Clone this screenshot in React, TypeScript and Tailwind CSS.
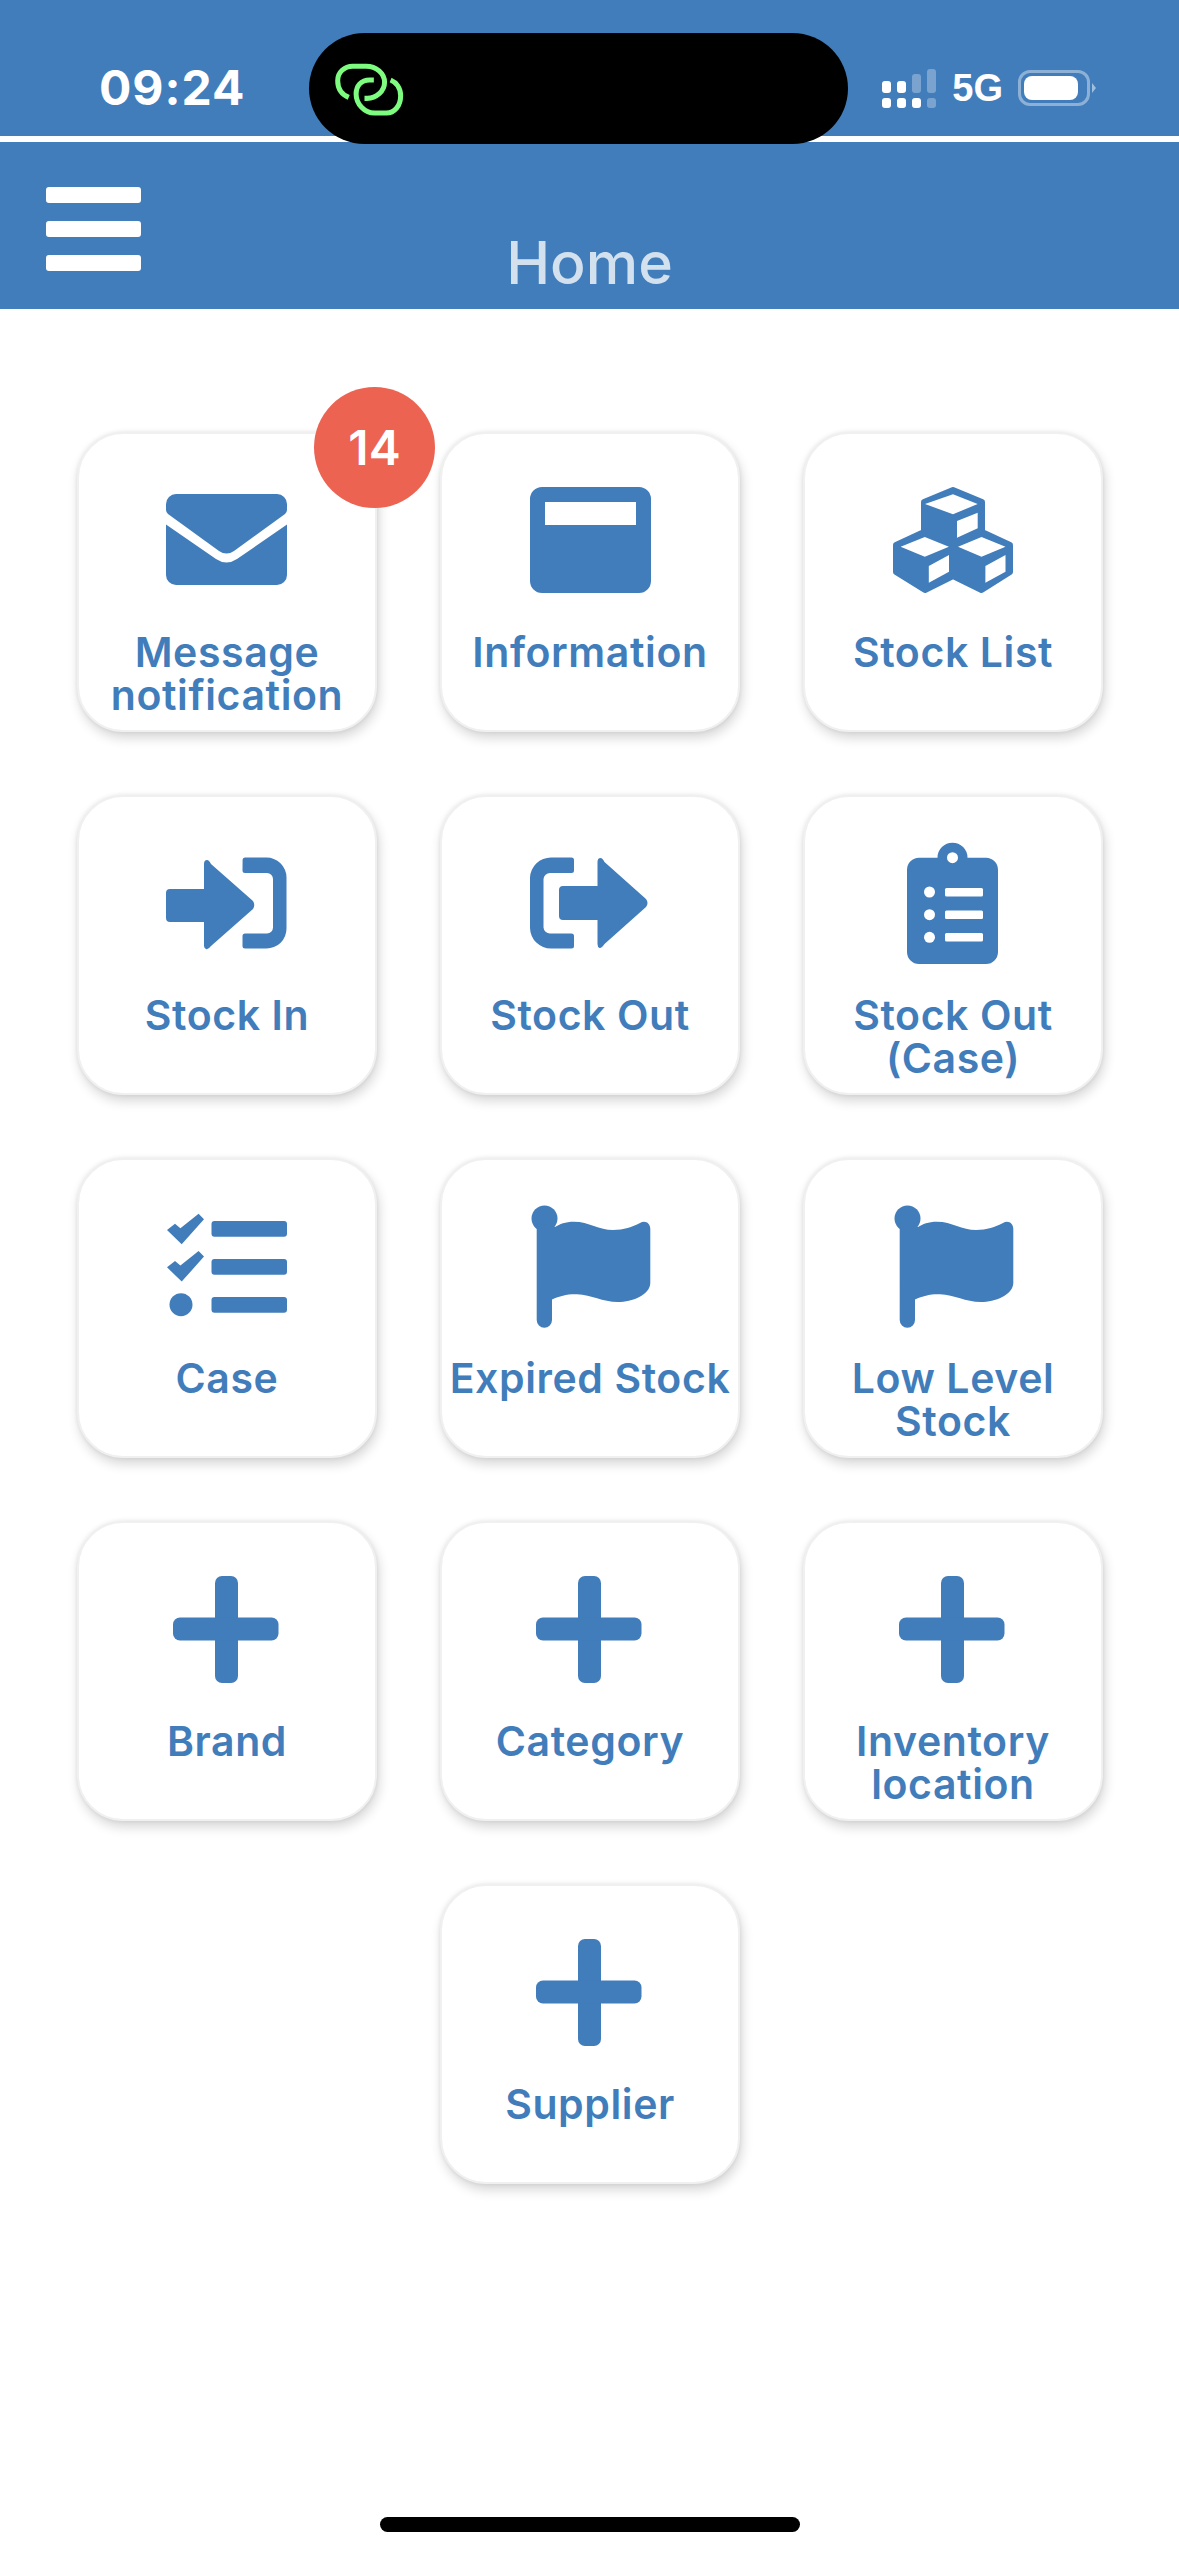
const menuItems = [
  { label: "Message notification", icon: <EnvelopeIcon />, badge: "14" },
  { label: "Information", icon: <InfoIcon /> },
  { label: "Stock List", icon: <CubesIcon /> },
  { label: "Stock In", icon: <StockInIcon /> },
  { label: "Stock Out", icon: <StockOutIcon /> },
  { label: "Stock Out (Case)", icon: <ClipboardIcon /> },
  { label: "Case", icon: <ChecklistIcon /> },
  { label: "Expired Stock", icon: <FlagIcon /> },
  { label: "Low Level Stock", icon: <FlagIcon /> },
  { label: "Brand", icon: <PlusIcon /> },
  { label: "Category", icon: <PlusIcon /> },
  { label: "Inventory location", icon: <PlusIcon /> },
  { label: "Supplier", icon: <PlusIcon /> },
];

export default function App() {
  return (
    <div className="relative flex h-[2556px] flex-col overflow-hidden bg-white font-['Inter',sans-serif]">
      {/* Status bar */}
      <div className="flex h-[136px] items-start justify-between bg-[#417dbb] pl-[99px] pr-[83px] pt-[60px] text-white">
        <span className="text-[48px] font-bold leading-[56px] tracking-[1px]">09:24</span>
        <div className="mt-[8px] flex items-center">
          <SignalBars />
          <span className="ml-[16px] font-['Liberation_Sans',sans-serif] text-[38px] font-bold leading-[40px]">5G</span>
          <Battery />
        </div>
      </div>
      <div className="h-[6px] bg-white" />

      {/* Dynamic island */}
      <div className="absolute left-[309px] top-[33px] h-[111px] w-[539px] rounded-[56px] bg-black">
        <svg className="absolute left-[22px] top-[24px]" width="77" height="64" viewBox="90 80 230 190" fill="none" stroke="#7dfc7f" strokeWidth="15">
          <path d="M143 200C120 190 110 170 110 150C110 125 130 107 155 107H195C225 107 250 128 250 155C250 182 225 203 198 203H190" />
          <path d="M218 148H205C180 148 165 165 165 190C165 220 190 247 220 247H255C280 247 298 225 298 195C298 172 285 155 268 148" />
        </svg>
      </div>

      {/* Header */}
      <div className="grid h-[167px] grid-cols-3 bg-[#417dbb]">
        <div className="flex flex-col gap-[18px] pl-[46px] pt-[45px]">
          <div className="h-[16px] w-[95px] rounded-[3px] bg-white" />
          <div className="h-[16px] w-[95px] rounded-[3px] bg-white" />
          <div className="h-[16px] w-[95px] rounded-[3px] bg-white" />
        </div>
        <div className="pt-[87px] text-center text-[59px] font-medium leading-[68px] text-[#d3e1ef]">Home</div>
      </div>

      {/* Menu grid */}
      <div className="flex flex-wrap justify-center gap-[63px] pl-[77px] pr-[76px] pt-[123px]">
        {menuItems.map((item) => (
          <MenuCard key={item.label} {...item} />
        ))}
      </div>

      <div className="mt-auto mb-[24px] h-[15px] w-[420px] self-center rounded-full bg-black" />
    </div>
  );
}

function MenuCard({ label, icon, badge }: { label: string; icon: React.ReactNode; badge?: string }) {
  return (
    <div className="relative flex h-[300px] w-[300px] flex-col items-center rounded-[46px] border-[2px] border-[#f0f0f0] bg-white pt-[43px] shadow-[2px_6px_12px_rgba(0,0,0,0.16),0_0_4px_rgba(0,0,0,0.08)]">
      {icon}
      <div className="mt-[26px] px-[2px] text-center text-[41px] font-semibold leading-[42.5px] tracking-[0.6px] text-[#417dbb]">{label}</div>
      {badge && (
        <div className="absolute right-[-60px] top-[-47px] flex h-[121px] w-[121px] items-center justify-center rounded-full bg-[#ec6352] text-[48px] font-semibold text-white">
          {badge}
        </div>
      )}
    </div>
  );
}

function IconBox({ children }: { children: React.ReactNode }) {
  return (
    <svg className="ml-[2px] shrink-0" width="128" height="128" viewBox="0 0 128 128" fill="#417dbb">
      {children}
    </svg>
  );
}

function EnvelopeIcon() {
  return (
    <IconBox>
      <path d="M12 17H113a10 10 0 0 1 10 10v6q0 2-2 4L70 74q-7.5 5-15 0L4 37q-2-2-2-4v-6a10 10 0 0 1 10-10z" />
      <path d="M2 47.5L52 82q10.5 7 21 0L123 47.5V98a10 10 0 0 1-10 10H12a10 10 0 0 1-10-10z" />
    </IconBox>
  );
}

function InfoIcon() {
  return (
    <IconBox>
      <path fillRule="evenodd" d="M15 10H112a12 12 0 0 1 12 12V104a12 12 0 0 1-12 12H15a12 12 0 0 1-12-12V22a12 12 0 0 1 12-12zM18 25V48H109V25z" />
    </IconBox>
  );
}

function CubesIcon() {
  return (
    <IconBox>
      <path stroke="#417dbb" strokeWidth="6" strokeLinejoin="round" d="M63 13L92 25V55L120 68V95L91.5 113L63 99L35 113L6 95V68L34 55V25Z" />
      <g fill="#fff">
        <path d="M35 27L63 17.3L87.7 27L63 37.3Z" />
        <path d="M67 44L87.7 35.7V51.3L67 60.7Z" />
        <path d="M10.6 69.7L34.8 60L58.9 69.7L34.8 79.7Z" />
        <path d="M38.8 89L59 78V94.7L38.8 105.7Z" />
        <path d="M68 69.7L91.5 60L115.5 69.7L91.5 79.7Z" />
        <path d="M95.4 89L115.5 78V94.7L95.4 105.7Z" />
      </g>
    </IconBox>
  );
}

function StockInIcon() {
  return (
    <IconBox>
      <path d="M40 24Q40 20 43 20Q45 20 47 24L89 61Q91.5 65 89 69L47 106Q44 110 42 109Q40 108 40 106V82H6Q2 82 2 78V53Q2 49 6 49H40Z" />
      <path d="M78.6 20q0-2.5 2.5-2.5H102a20 20 0 0 1 20.5 20V88a20 20 0 0 1-20.5 20.5H81q-2.5 0-2.5-2.5V96q0-2.5 2.5-2.5H103a6 6 0 0 0 6-6V39a6 6 0 0 0-6-6H81q-2.5 0-2.5-2.5Z" />
    </IconBox>
  );
}

function StockOutIcon() {
  return (
    <IconBox>
      <path d="M47 20q0-2.5-2.5-2.5H24a21 21 0 0 0-21 20V88a21 21 0 0 0 21 20.5H44.5q2.5 0 2.5-2.5V96q0-2.5-2.5-2.5H23a6.5 6.5 0 0 1-6.5-6V39a6.5 6.5 0 0 1 6.5-6H44.5q2.5 0 2.5-2.5Z" />
      <path d="M70.5 22Q70.5 18 73.5 18Q75.5 18 77.5 22L119 59Q122 63 119 67L77.5 104Q74.5 108.500 72.5 108Q70.500 107 70.500 104V80H36Q32 80 32 76V50Q32 46 36 46H70.500Z" />
    </IconBox>
  );
}

function ClipboardIcon() {
  return (
    <IconBox>
      <path
        fillRule="evenodd"
        d="M47.500 17.700A15 15 0 0 1 77.500 17.700H96a12 12 0 0 1 12 12V112a12 12 0 0 1-12 12H29a12 12 0 0 1-12-12V29.700a12 12 0 0 1 12-12zM57 17.700a5.500 5.500 0 0 0 11 0a5.500 5.500 0 0 0-11 0z"
      />
      <g fill="#fff">
        <circle cx="39.500" cy="52" r="5.500" />
        <circle cx="39.500" cy="74.700" r="5.500" />
        <circle cx="39.500" cy="97.300" r="5.500" />
        <rect x="55" y="48" width="38" height="8.500" rx="1.500" />
        <rect x="55" y="70.500" width="38" height="8.500" rx="1.500" />
        <rect x="55" y="93" width="38" height="8.500" rx="1.500" />
      </g>
    </IconBox>
  );
}

function ChecklistIcon() {
  return (
    <IconBox>
      <rect x="47.500" y="18" width="75.500" height="15.700" rx="3" />
      <rect x="47.500" y="56" width="75.500" height="15.700" rx="3" />
      <rect x="47.500" y="94" width="75.500" height="15.700" rx="3" />
      <path d="M3 27L11 20.700L16.400 25.300L34.600 10.700L40 16.300L17.700 41.300Z" />
      <path d="M3 64.300L11 58L16.400 62.600L34.600 48L40 53.600L17.700 78.600Z" />
      <circle cx="17" cy="101.700" r="11.500" />
    </IconBox>
  );
}

function FlagIcon() {
  return (
    <IconBox>
      <circle cx="17.500" cy="15.500" r="13" />
      <path d="M9.700 20V117a7.600 7.600 0 0 0 15.300 0V96.500C33 93 40 91 50 91.300C65 92 75 99 91 99C105 99 123 92 123.300 80V26C123.300 20 118 17 113 20C105 24 97 27 86 27C72 27 62 18.700 47 18.700C38 18.700 33 21 28 24Z" />
    </IconBox>
  );
}

function PlusIcon() {
  return (
    <IconBox>
      <rect x="51" y="10" width="23" height="107" rx="7" />
      <rect x="9" y="51.500" width="105.500" height="23" rx="7" />
    </IconBox>
  );
}

function SignalBars() {
  return (
    <div className="flex items-end gap-[6px]">
      {[
        { top: "h-[12px] bg-white", bottom: "bg-white" },
        { top: "h-[12px] bg-white", bottom: "bg-white" },
        { top: "h-[19px] bg-white/30", bottom: "bg-white" },
        { top: "h-[24px] bg-white/30", bottom: "bg-white/30" },
      ].map((bar, i) => (
        <div key={i} className="flex w-[9px] flex-col gap-[5px]">
          <div className={`rounded-[3px] ${bar.top}`} />
          <div className={`h-[10px] rounded-[3px] ${bar.bottom}`} />
        </div>
      ))}
    </div>
  );
}

function Battery() {
  return (
    <div className="ml-[15px] flex items-center">
      <div className="h-[36px] w-[72px] rounded-[12px] border-[3px] border-white/40 p-[3px]">
        <div className="h-full w-[54px] rounded-[8px] bg-white" />
      </div>
      <svg className="ml-[2px]" width="4" height="10" viewBox="0 0 4 10" fill="#ffffff" fillOpacity="0.5">
        <path d="M0 0L4 5L0 10Z" />
      </svg>
    </div>
  );
}
